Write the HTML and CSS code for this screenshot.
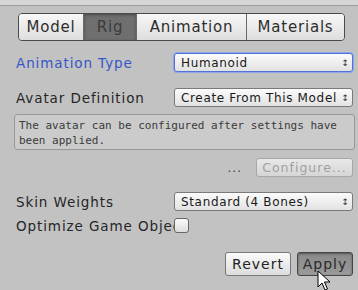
FILE: index.html
```html
<!DOCTYPE html>
<html lang="en">
<head>
  <meta charset="UTF-8" />
  <title>Rig Import Settings</title>
  <link rel="stylesheet" href="styles.css">
</head>
<body>
<div class="topstrip"></div>
<div class="panel">
  <div class="tabs">
    <div class="tab t-model">Model</div>
    <div class="tab t-rig active">Rig</div>
    <div class="tab t-anim">Animation</div>
    <div class="tab t-mat">Materials</div>
  </div>

  <div class="row r-type">
    <span class="label blue">Animation Type</span>
    <div class="popup focus">Humanoid<span class="arrows">&#8597;</span></div>
  </div>

  <div class="row r-avatar">
    <span class="label">Avatar Definition</span>
    <div class="popup">Create From This Model<span class="arrows">&#8597;</span></div>
  </div>

  <div class="helpbox">The avatar can be configured after settings have been applied.</div>

  <div class="config-row">
    <span class="dots">...</span>
    <div class="btn disabled">Configure...</div>
  </div>

  <div class="row r-skin">
    <span class="label">Skin Weights</span>
    <div class="popup">Standard (4 Bones)<span class="arrows">&#8597;</span></div>
  </div>

  <div class="row r-opt">
    <span class="label clip">Optimize Game Objects</span>
    <div class="check"></div>
  </div>

  <div class="actions">
    <div class="btn revert">Revert</div>
    <div class="btn apply pressed">Apply</div>
    <svg class="cursor" width="14" height="22" viewBox="0 0 14 22">
      <path d="M1 1 L1 17 L5 13 L8 20 L10.5 19 L7.5 12 L13 12 Z" fill="#fff" stroke="#000" stroke-width="1"/>
    </svg>
  </div>
</div>
</body>
</html>
```
FILE: styles.css
```css
body {
  margin: 0;
  width: 358px;
  height: 290px;
  overflow: hidden;
  background: #c2c2c2;
  font-family: "DejaVu Sans", sans-serif;
  color: #222;
}
.topstrip { height: 5px; background: #d6d6d6; border-bottom: 1px solid #9a9a9a; }
.panel { padding: 7px 5px 0 14px; position: relative; }

.tabs { display: flex; margin-left: 4px; width: 327px; height: 28px; border: 1px solid #4a4a4a; border-radius: 4px; overflow: hidden; box-sizing: border-box; }
.tab { display: flex; align-items: center; justify-content: center; font-size: 15px; letter-spacing: 0.8px; color: #2e2e2e; background: linear-gradient(#f7f7f7, #dedede); border-left: 1px solid #6a6a6a; }
.tab:first-child { border-left: none; }
.t-model { width: 64px; }
.t-rig { width: 52px; }
.t-anim { width: 109px; }
.t-mat { flex: 1; }
.tab.active { background: #6f6f6f; color: #3b3b3b; box-shadow: inset 0 1px 3px #4a4a4a; }

.row { display: flex; align-items: center; height: 19px; }
.label { width: 158px; font-size: 13.5px; letter-spacing: 0.9px; padding-left: 2px; white-space: nowrap; color: #262626; }
.label.blue { color: #3556c8; }
.label.clip { overflow: hidden; }
.r-type { margin-top: 12px; }
.r-avatar { margin-top: 16px; }
.r-skin { margin-top: 15px; }
.r-opt { margin-top: 5px; }

.popup { width: 179px; height: 19px; box-sizing: border-box; border: 1px solid #7a7a7a; border-radius: 3px; background: linear-gradient(#fbfbfb, #e2e2e2); font-size: 12px; letter-spacing: 0.65px; padding-left: 6px; display: flex; align-items: center; position: relative; color: #1a1a1a; }
.popup.focus { border-color: #5272d6; box-shadow: 0 0 0 1px #8fa6ea; }
.arrows { position: absolute; right: 3px; font-size: 9px; letter-spacing: 0; color: #333; }

.helpbox { margin-top: 7px; width: 341px; height: 36px; box-sizing: border-box; border: 1px solid #999; border-radius: 3px; background: #cbcbcb; font-family: "DejaVu Sans Mono", monospace; font-size: 11px; line-height: 15px; padding: 3px 4px; color: #3a3a3a; }

.config-row { display: flex; justify-content: flex-end; align-items: center; gap: 14px; margin-top: 8px; width: 339px; }
.dots { font-size: 12px; letter-spacing: 1px; color: #444; }
.btn { height: 19px; box-sizing: border-box; border: 1px solid #777; border-radius: 3px; background: linear-gradient(#fafafa, #dcdcdc); font-size: 12.5px; letter-spacing: 1px; display: flex; align-items: center; justify-content: center; }
.btn.disabled { width: 97px; color: #a0a0a0; border-color: #a8a8a8; background: linear-gradient(#e8e8e8, #d6d6d6); }

.check { width: 15px; height: 15px; box-sizing: border-box; border: 1px solid #666; border-radius: 3px; background: linear-gradient(#fafafa, #dcdcdc); }

.actions { display: flex; justify-content: flex-end; gap: 6px; margin-top: 17px; width: 339px; position: relative; }
.actions .btn { height: 24px; font-size: 14px; }
.revert { width: 66px; }
.apply { width: 56px; }
.btn.pressed { background: linear-gradient(#8a8a8a, #9a9a9a); border-color: #444; color: #2a2a2a; box-shadow: inset 0 1px 2px #555; }
.cursor { position: absolute; left: 303px; top: 18px; }
```
